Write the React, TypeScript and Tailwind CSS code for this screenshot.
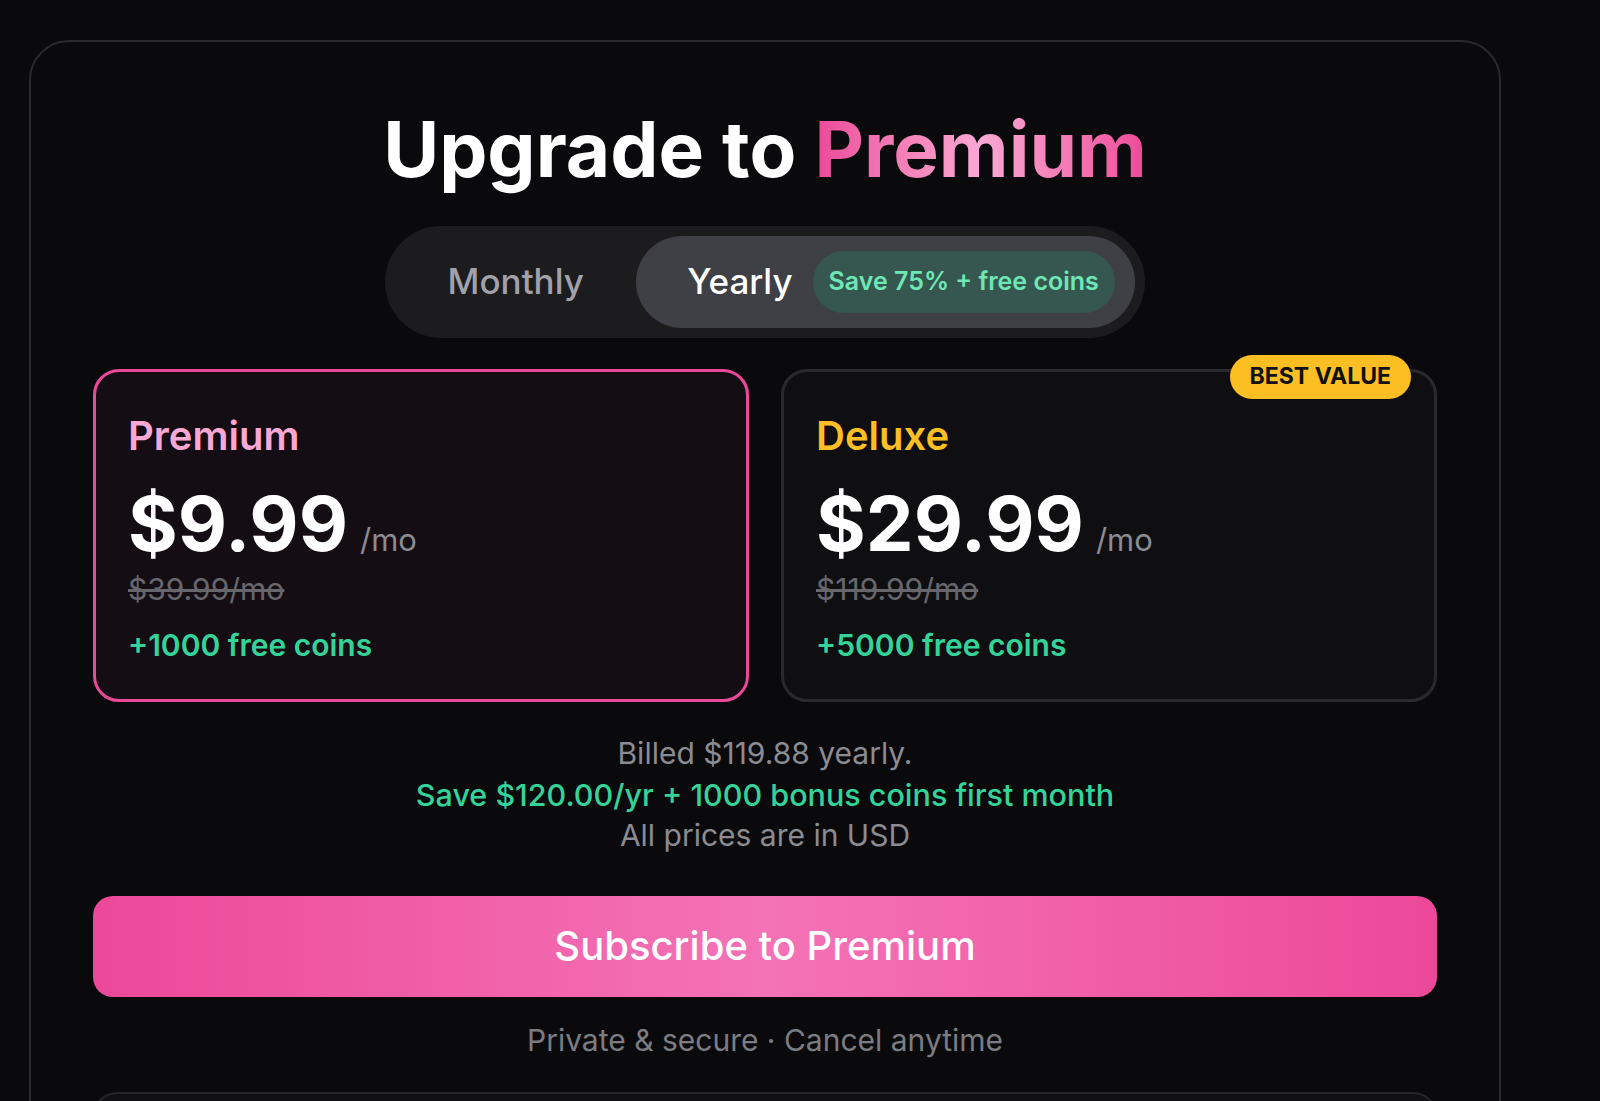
import React from "react";

type Plan = {
  name: string;
  nameClass: string;
  price: string;
  was: string;
  coins: string;
  selected: boolean;
  badge?: string;
};

const plans: Plan[] = [
  {
    name: "Premium",
    nameClass: "text-[#f9a8d4]",
    price: "$9.99",
    was: "$39.99/mo",
    coins: "+1000 free coins",
    selected: true,
  },
  {
    name: "Deluxe",
    nameClass: "text-[#fbbf24]",
    price: "$29.99",
    was: "$119.99/mo",
    coins: "+5000 free coins",
    selected: false,
    badge: "BEST VALUE",
  },
];

function PlanCard({ plan }: { plan: Plan }) {
  return (
    <div
      className={
        plan.selected
          ? "relative rounded-[26px] border-[3px] border-[#ec4899] bg-[#150d14] px-8 pt-[44px] pb-[39px]"
          : "relative rounded-[26px] border-[3px] border-[#2a2a2e] bg-[#0f0f12] px-8 pt-[44px] pb-[39px]"
      }
    >
      {plan.badge && (
        <div className="absolute top-[-17px] right-[23px] flex h-[44px] items-center rounded-full bg-[#fbbf24] px-5 text-[23px] font-bold leading-none text-[#111111]">
          {plan.badge}
        </div>
      )}
      <div className={`text-[40px] font-semibold leading-none ${plan.nameClass}`}>
        {plan.name}
      </div>
      <div className="mt-[29px] flex items-baseline">
        <span className="text-[76px] font-bold leading-none text-white">{plan.price}</span>
        <span className="ml-3 text-[31px] leading-none text-[#8b8b92]">/mo</span>
      </div>
      <div className="mt-[13px] text-[30px] leading-none text-[#66666c] line-through">
        {plan.was}
      </div>
      <div className="mt-[26px] text-[30px] font-semibold leading-none text-[#34d399]">
        {plan.coins}
      </div>
    </div>
  );
}

export default function App() {
  return (
    <div
      className="min-h-screen overflow-hidden bg-[#0a0a0c] pt-10 pl-[29px]"
      style={{ fontFamily: "Inter, 'Noto Sans', sans-serif" }}
    >
      <div className="w-[1472px] rounded-[40px] border-2 border-[#2a2a2e] bg-[#0a0a0d] px-[60px] pt-[69px] pb-10">
        <h1 className="text-center text-[76.5px] font-bold leading-none text-white">
          Upgrade to{" "}
          <span className="bg-gradient-to-r from-[#ec4899] via-[#f9a8d4] to-[#ec4899] bg-clip-text text-transparent">
            Premium
          </span>
        </h1>

        <div className="mt-[38px] flex justify-center">
          <div className="flex h-[112px] items-center rounded-full bg-[#1c1c1f] p-[10px]">
            <button className="flex h-[92px] w-[241px] items-center justify-center text-[35px] font-medium text-[#a1a1aa]">
              Monthly
            </button>
            <button className="flex h-[92px] items-center gap-5 rounded-full bg-[#3f3f46] pl-[51px] pr-5">
              <span className="text-[35px] font-medium text-white">Yearly</span>
              <span className="flex h-[62px] items-center rounded-full bg-[#36574f] px-4 text-[25px] font-semibold text-[#6ee7b7]">
                Save 75% + free coins
              </span>
            </button>
          </div>
        </div>

        <div className="mt-[31px] grid grid-cols-2 gap-8 px-[2px]">
          {plans.map((p) => (
            <PlanCard key={p.name} plan={p} />
          ))}
        </div>

        <div className="mt-[31px] text-center text-[30px] leading-[41px]">
          <p className="text-[#8b8b92]">Billed $119.88 yearly.</p>
          <p className="text-[30.5px] font-medium text-[#34d399]">
            Save $120.00/yr + 1000 bonus coins first month
          </p>
          <p className="text-[#8b8b92]">All prices are in USD</p>
        </div>

        <button className="mx-[2px] mt-[40px] flex h-[101px] w-[calc(100%-4px)] items-center justify-center rounded-[20px] bg-gradient-to-r from-[#ec4899] via-[#f472b6] to-[#ec4899] text-[40px] font-medium text-white">
          Subscribe to Premium
        </button>

        <p className="mt-[28px] text-center text-[30px] leading-none text-[#7c7c83]">
          Private &amp; secure · Cancel anytime
        </p>

        <div className="mx-[2px] mt-[37px] h-[200px] rounded-3xl border-2 border-[#26262a] bg-[#111114]" />
      </div>
    </div>
  );
}
